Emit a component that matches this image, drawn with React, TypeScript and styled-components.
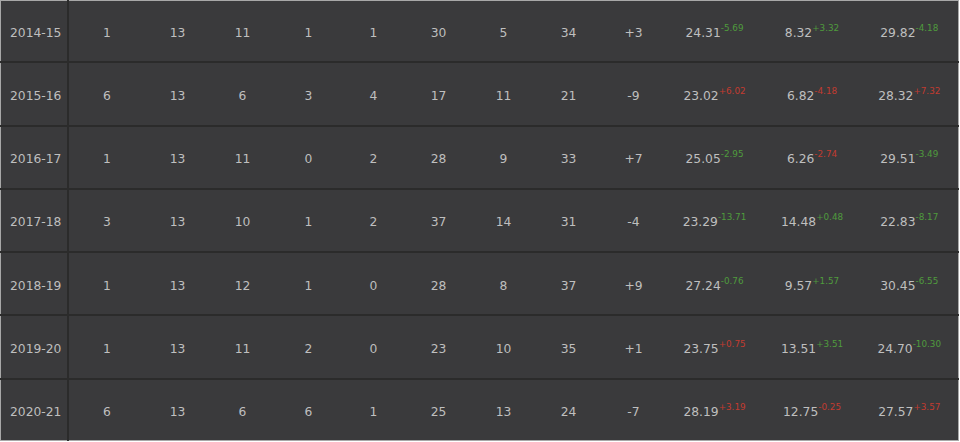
import styled, { createGlobalStyle } from 'styled-components'

const GlobalStyle = createGlobalStyle`
    html, body {
        margin: 0;
        padding: 0;
        background: #ffffff;
    }
`

const Table = styled.table`
    width: 959px;
    height: 441px;
    border-collapse: collapse;
    table-layout: fixed;
    background: #3a3a3c;
    border: 1px solid #a8a8a8;
    font-family: "DejaVu Sans", Verdana, sans-serif;
    font-size: 12.3px;
    color: #bfbfbf;
`

const Row = styled.tr`
    border-top: 2px solid #2b2b2b;

    &:first-child {
        border-top: none;
    }
`

const SeasonCell = styled.td`
    padding: 4px 0 0 9px;
    text-align: left;
    border-right: 2px solid #2b2b2b;
    white-space: nowrap;
`

const Cell = styled.td`
    padding: 4px 0 0;
    text-align: center;
    white-space: nowrap;
`

const Diff = styled.sup<{ $good: boolean }>`
    font-size: 8.8px;
    vertical-align: 6px;
    line-height: 0;
    color: ${p => (p.$good ? '#4f9a3c' : '#c23a30')};
`

const widths = [67, 78, 64, 66, 66, 64, 66, 64, 66, 64, 98, 97, 98]

type Stat = [string, string, boolean]

const rows: { season: string; nums: string[]; stats: Stat[] }[] = [
    { season: '2014-15', nums: ['1', '13', '11', '1', '1', '30', '5', '34', '+3'], stats: [['24.31', '-5.69', true], ['8.32', '+3.32', true], ['29.82', '-4.18', true]] },
    { season: '2015-16', nums: ['6', '13', '6', '3', '4', '17', '11', '21', '-9'], stats: [['23.02', '+6.02', false], ['6.82', '-4.18', false], ['28.32', '+7.32', false]] },
    { season: '2016-17', nums: ['1', '13', '11', '0', '2', '28', '9', '33', '+7'], stats: [['25.05', '-2.95', true], ['6.26', '-2.74', false], ['29.51', '-3.49', true]] },
    { season: '2017-18', nums: ['3', '13', '10', '1', '2', '37', '14', '31', '-4'], stats: [['23.29', '-13.71', true], ['14.48', '+0.48', true], ['22.83', '-8.17', true]] },
    { season: '2018-19', nums: ['1', '13', '12', '1', '0', '28', '8', '37', '+9'], stats: [['27.24', '-0.76', true], ['9.57', '+1.57', true], ['30.45', '-6.55', true]] },
    { season: '2019-20', nums: ['1', '13', '11', '2', '0', '23', '10', '35', '+1'], stats: [['23.75', '+0.75', false], ['13.51', '+3.51', true], ['24.70', '-10.30', true]] },
    { season: '2020-21', nums: ['6', '13', '6', '6', '1', '25', '13', '24', '-7'], stats: [['28.19', '+3.19', false], ['12.75', '-0.25', false], ['27.57', '+3.57', false]] },
]

export default function App() {
    return (
        <>
            <GlobalStyle />
            <Table>
                <colgroup>
                    {widths.map((w, i) => (
                        <col key={i} style={{ width: w }} />
                    ))}
                </colgroup>
                <tbody>
                    {rows.map(r => (
                        <Row key={r.season}>
                            <SeasonCell>{r.season}</SeasonCell>
                            {r.nums.map((n, i) => (
                                <Cell key={i}>{n}</Cell>
                            ))}
                            {r.stats.map(([v, d, good], i) => (
                                <Cell key={'s' + i}>
                                    {v}
                                    <Diff $good={good}>{d}</Diff>
                                </Cell>
                            ))}
                        </Row>
                    ))}
                </tbody>
            </Table>
        </>
    )
}
